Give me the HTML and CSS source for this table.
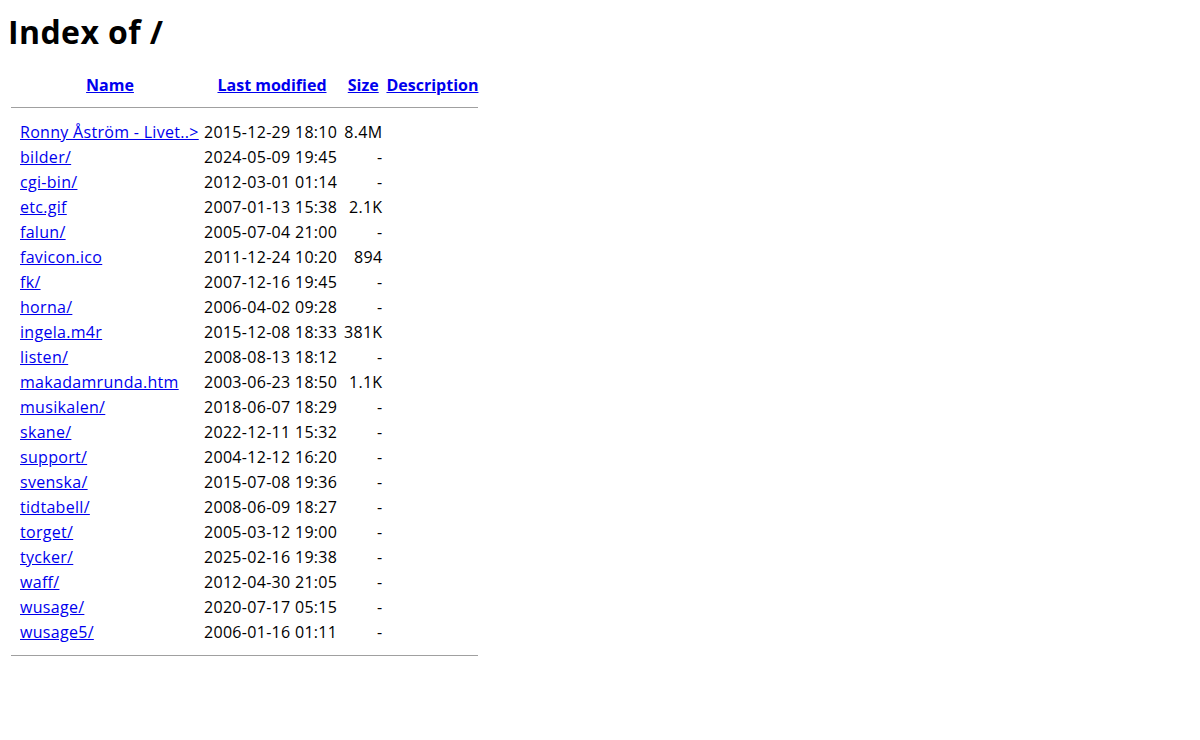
FILE: index.html
```html
<!DOCTYPE html>
<html>
<head>
<meta charset="utf-8">
<title>Index of /</title>
<link rel="stylesheet" href="styles.css">
</head>
<body>
<h1 class="title">Index of /</h1>
<table class="listing">
<tr class="head"><th class="ico"></th><th class="c-name"><a href="#">Name</a></th><th class="c-date"><a href="#">Last modified</a></th><th class="c-size"><a href="#">Size</a></th><th class="c-desc"><a href="#">Description</a></th></tr>
<tr><th colspan="5" class="rule rule-top"><hr></th></tr>
<tr><td></td><td><a href="#">Ronny Åström - Livet..&gt;</a></td><td>2015-12-29 18:10</td><td class="sz">8.4M</td><td></td></tr>
<tr><td></td><td><a href="#">bilder/</a></td><td>2024-05-09 19:45</td><td class="sz">- </td><td></td></tr>
<tr><td></td><td><a href="#">cgi-bin/</a></td><td>2012-03-01 01:14</td><td class="sz">- </td><td></td></tr>
<tr><td></td><td><a href="#">etc.gif</a></td><td>2007-01-13 15:38</td><td class="sz">2.1K</td><td></td></tr>
<tr><td></td><td><a href="#">falun/</a></td><td>2005-07-04 21:00</td><td class="sz">- </td><td></td></tr>
<tr><td></td><td><a href="#">favicon.ico</a></td><td>2011-12-24 10:20</td><td class="sz">894 </td><td></td></tr>
<tr><td></td><td><a href="#">fk/</a></td><td>2007-12-16 19:45</td><td class="sz">- </td><td></td></tr>
<tr><td></td><td><a href="#">horna/</a></td><td>2006-04-02 09:28</td><td class="sz">- </td><td></td></tr>
<tr><td></td><td><a href="#">ingela.m4r</a></td><td>2015-12-08 18:33</td><td class="sz">381K</td><td></td></tr>
<tr><td></td><td><a href="#">listen/</a></td><td>2008-08-13 18:12</td><td class="sz">- </td><td></td></tr>
<tr><td></td><td><a href="#">makadamrunda.htm</a></td><td>2003-06-23 18:50</td><td class="sz">1.1K</td><td></td></tr>
<tr><td></td><td><a href="#">musikalen/</a></td><td>2018-06-07 18:29</td><td class="sz">- </td><td></td></tr>
<tr><td></td><td><a href="#">skane/</a></td><td>2022-12-11 15:32</td><td class="sz">- </td><td></td></tr>
<tr><td></td><td><a href="#">support/</a></td><td>2004-12-12 16:20</td><td class="sz">- </td><td></td></tr>
<tr><td></td><td><a href="#">svenska/</a></td><td>2015-07-08 19:36</td><td class="sz">- </td><td></td></tr>
<tr><td></td><td><a href="#">tidtabell/</a></td><td>2008-06-09 18:27</td><td class="sz">- </td><td></td></tr>
<tr><td></td><td><a href="#">torget/</a></td><td>2005-03-12 19:00</td><td class="sz">- </td><td></td></tr>
<tr><td></td><td><a href="#">tycker/</a></td><td>2025-02-16 19:38</td><td class="sz">- </td><td></td></tr>
<tr><td></td><td><a href="#">waff/</a></td><td>2012-04-30 21:05</td><td class="sz">- </td><td></td></tr>
<tr><td></td><td><a href="#">wusage/</a></td><td>2020-07-17 05:15</td><td class="sz">- </td><td></td></tr>
<tr><td></td><td><a href="#">wusage5/</a></td><td>2006-01-16 01:11</td><td class="sz">- </td><td></td></tr>
<tr><th colspan="5" class="rule rule-bottom"><hr></th></tr>
</table>
</body>
</html>
```

FILE: styles.css
```css
body {
  margin: 8px;
  font-family: "Open Sans", "Noto Sans", sans-serif;
  font-size: 16px;
  color: #000;
  background: #fff;
}
.title {
  font-size: 32px;
  font-weight: bold;
  margin: 3px 0 19px 0;
  line-height: 42px;
  letter-spacing: 0.4px;
}
.listing {
  border-spacing: 2px;
  line-height: 21px;
}
.listing th, .listing td {
  padding: 1px;
  white-space: nowrap;
}
.listing a {
  color: #0000ee;
}
.ico { width: 5px; }
.c-name { width: 180px; }
.c-date { width: 136px; }
.c-size { width: 38px; }
.c-desc { width: 92px; }
.sz { text-align: right; }
.rule hr {
  border: none;
  border-top: 1px solid #a0a0a0;
  height: 0;
}
.rule-top hr { margin: 7px 0 10px 0; }
.rule-bottom hr { margin: 8px 0 9px 0; }
.listing td { letter-spacing: 0.3px; }
```
